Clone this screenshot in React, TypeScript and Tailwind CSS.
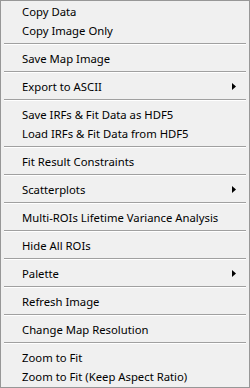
type Entry = { label: string; sub?: boolean } | "sep";

const entries: Entry[] = [
  { label: "Copy Data" },
  { label: "Copy Image Only" },
  "sep",
  { label: "Save Map Image" },
  "sep",
  { label: "Export to ASCII", sub: true },
  "sep",
  { label: "Save IRFs & Fit Data as HDF5" },
  { label: "Load IRFs & Fit Data from HDF5" },
  "sep",
  { label: "Fit Result Constraints" },
  "sep",
  { label: "Scatterplots", sub: true },
  "sep",
  { label: "Multi-ROIs Lifetime Variance Analysis" },
  "sep",
  { label: "Hide All ROIs" },
  "sep",
  { label: "Palette", sub: true },
  "sep",
  { label: "Refresh Image" },
  "sep",
  { label: "Change Map Resolution" },
  "sep",
  { label: "Zoom to Fit" },
  { label: "Zoom to Fit (Keep Aspect Ratio)" },
];

export default function App() {
  return (
    <div
      className="w-[250px] h-[388px] border border-[#979797] bg-[#f0f0f0] py-px text-black text-[11.3px]"
      style={{ fontFamily: '"Noto Sans", "Open Sans", sans-serif' }}
    >
      {entries.map((e, i) =>
        e === "sep" ? (
          <div key={i} className="h-[9px] pt-[3px] pl-[3px] pr-[3px]">
            <div className="h-px bg-[#a0a0a0]" />
            <div className="h-px bg-white" />
          </div>
        ) : (
          <div key={i} className="flex h-[19px] items-center pl-[21px] pr-[13px]">
            <span className="flex-1 leading-[19px] whitespace-nowrap">{e.label}</span>
            {e.sub && (
              <svg width="4" height="7" viewBox="0 0 4 7" className="block">
                <path d="M0 0 L4 3.5 L0 7 Z" fill="#000" />
              </svg>
            )}
          </div>
        )
      )}
    </div>
  );
}
